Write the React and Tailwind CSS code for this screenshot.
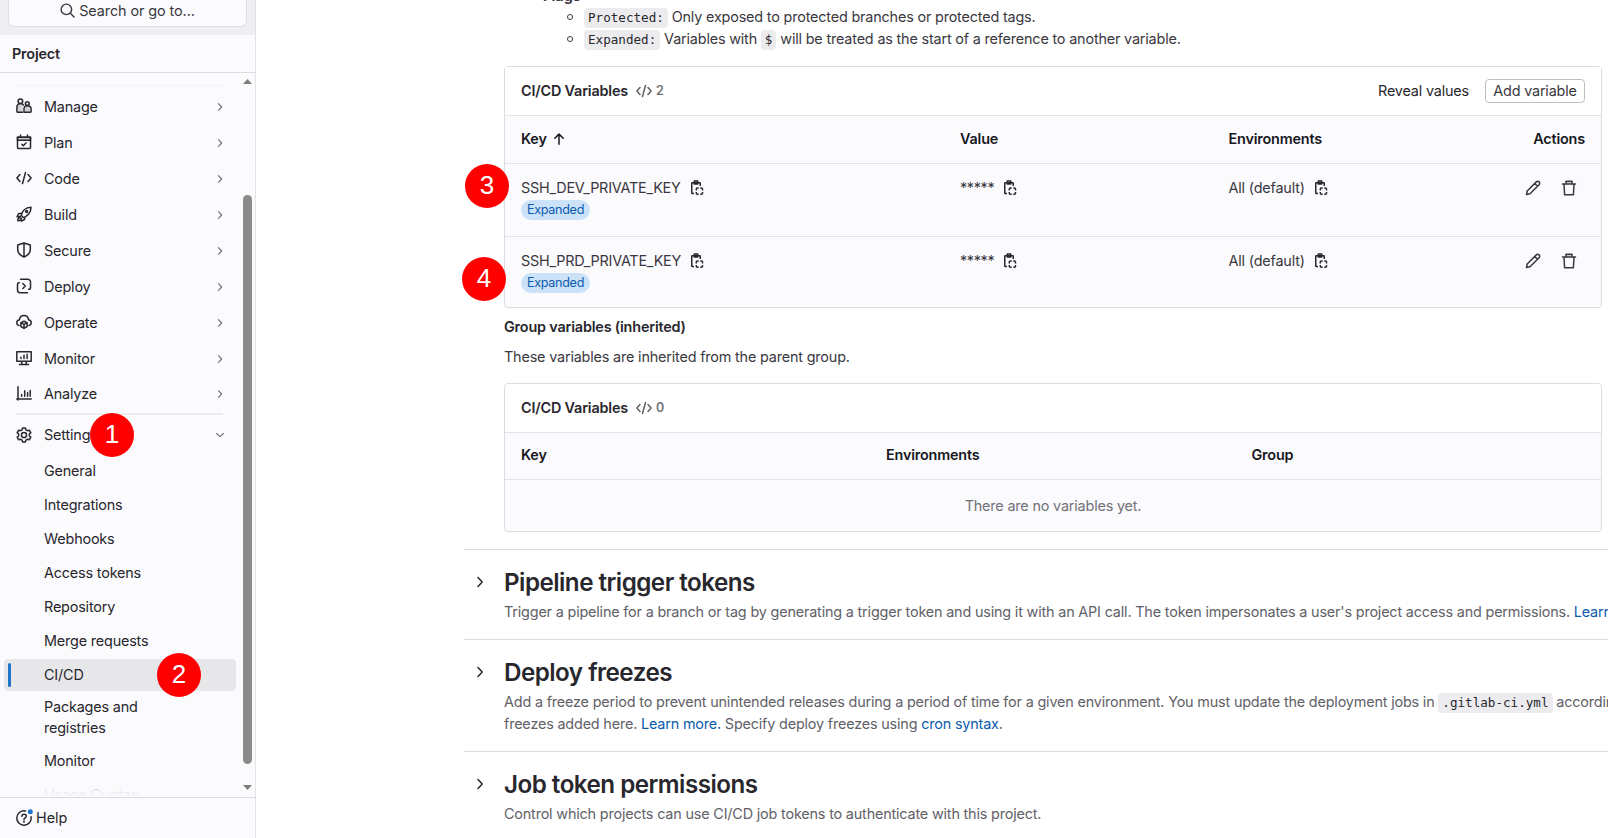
import React from "react";

const strokeProps = {
  fill: "none",
  stroke: "currentColor",
  strokeWidth: 1.5,
  strokeLinecap: "round",
  strokeLinejoin: "round",
};

function Icon({ className = "size-4", children }) {
  return (
    <svg viewBox="0 0 16 16" className={`shrink-0 ${className}`} {...strokeProps}>
      {children}
    </svg>
  );
}

const glyphs = {
  manage: (
    <>
      <path d="M2.300 6h4.200v8H1.500V8zM9 8.500h5v5.500H9z" fill="currentColor" fillOpacity=".2" stroke="none" />
      <circle cx="4.4" cy="3.2" r="2.3" />
      <path d="M6.6 14.2H1.5a.6.6 0 0 1-.6-.6V8.8c0-1.9 1.5-3.2 3.5-3.2 1.4 0 2.5.6 3 1.6" />
      <circle cx="11.3" cy="5.6" r="1.9" />
      <path d="M8 14.2h6.5a.6.6 0 0 0 .6-.6v-2.8c0-1.8-1.6-3.1-3.6-3.1S8 9 8 10.800z" />
    </>
  ),
  plan: (
    <>
      <path d="M1.500 6.200V3.200h13v3z" fill="currentColor" fillOpacity=".25" />
      <path d="M1.5 3.2h13v10.300a1 1 0 0 1-1 1h-11a1 1 0 0 1-1-1zM4.500 1v2M11.500 1v2M5.800 10.200l1.500 1.500 2.700-2.800" />
    </>
  ),
  code: <path d="M4 4.500.9 8 4 11.500M12 4.500 15.100 8 12 11.500M9.500 2.500l-3 11" />,
  build: (
    <>
      <path d="M5.200 9.300c.7-3.600 3.800-7.800 9.800-8.100.1 5.600-3.700 9.300-7.800 10.400zM5.600 7.200 2.700 7.500 1 10.800l3.300-.2M8.800 11l-.3 2.500-3.200 1.700-.1-3M4 11.800c-1.500.2-2.300 1.600-2.200 3 1.100 0 2.200-.2 2.900-1.200" />
      <circle cx="10.600" cy="5.500" r="1" />
    </>
  ),
  secure: <path d="M8 1 1.700 3v4.500c0 3.700 2.800 6 6.300 7.700 3.500-1.700 6.300-4 6.300-7.700V3zM8 1v14" />,
  deploy: (
    <path d="M4.500 1.300h7.300a2.700 2.700 0 0 1 2.700 2.700v5.800a1.500 1.500 0 0 1-1.500 1.500h-.4M3.300 4.700H3A1.500 1.500 0 0 0 1.500 6.200V12a2.700 2.700 0 0 0 2.700 2.700h7.300M6.800 5.500 9.300 8l-2.500 2.500" />
  ),
  operate: (
    <>
      <path d="M3 11.500C1.500 11.200.8 10 .8 8.700c0-1.600 1.200-2.700 2.600-2.900C3.700 3.300 5.600 1.500 8 1.500s4.300 1.800 4.600 4.300c1.400.2 2.600 1.300 2.600 2.900 0 1.300-.7 2.500-2.200 2.800" />
      <path d="M8 7.200 4.900 8.700v3.900L8 14.400l3.100-1.800V8.700zM5 8.800l3 1.500 3-1.500M8 10.500v3.800" />
    </>
  ),
  monitor: (
    <path d="M.8 1.800h14.400v9.400H.8zM5.700 11.500v2.700M10.300 11.500v2.700M3.500 14.400h9M4.900 7.200v1.300M8 5.200v3.300M11.100 4.200v4.300" />
  ),
  analyze: <path d="M2 .8v13.100M.8 13.100h14.400M5.600 8.500v1.700M8.700 4.700v5.500M11.600 6.500v3.700M14.200 4.500v5.700" />,
  settings: (
    <>
      <path d="M6.700.9h2.600l.6 1.900 1.500.9 2-.4 1.400 2.300L13.400 7v2l1.400 1.400-1.400 2.300-2-.4-1.500.9-.6 1.900H6.700l-.6-1.900-1.500-.9-2 .4-1.400-2.300L2.600 9V7L1.200 5.600l1.400-2.300 2 .4 1.500-.9z" />
      <circle cx="8" cy="8" r="2.600" />
    </>
  ),
};

const menu = [
  ["Manage", "manage"],
  ["Plan", "plan"],
  ["Code", "code"],
  ["Build", "build"],
  ["Secure", "secure"],
  ["Deploy", "deploy"],
  ["Operate", "operate"],
  ["Monitor", "monitor"],
  ["Analyze", "analyze"],
];

const Chevron = ({ className }) => (
  <Icon className={className}>
    <path d="M6 3.500 10.200 8 6 12.500" />
  </Icon>
);

function Callout({ n, className }) {
  return (
    <span
      className={`absolute z-10 flex size-11 items-center justify-center rounded-full bg-[#ff0000] pb-[3px] font-['Liberation_Sans',sans-serif] text-[26px] leading-none tracking-normal text-white ${className}`}
    >
      {n}
    </span>
  );
}

function Sidebar() {
  return (
    <aside className="flex h-full w-64 shrink-0 flex-col border-r border-[#e3e3e6] bg-[#fbfafd] text-[#28272d]">
      <div className="flex h-[35px] shrink-0 items-start bg-[#efeff1] px-2">
        <div className="flex h-[27px] w-full items-center justify-center gap-1 rounded-b-md border border-t-0 border-[#dfdfe2] bg-[#fbfafd] pb-[5px] text-[#3a383f]">
          <Icon className="size-[15px]">
            <circle cx="6.800" cy="6.800" r="5.600" />
            <path d="m11 11 4 4" />
          </Icon>
          <span className="tracking-[-0.080px]">Search or go to...</span>
        </div>
      </div>
      <div className="flex h-[38px] shrink-0 items-center border-b border-[#dcdcde] pl-3 font-semibold">Project</div>
      <div className="flex min-h-0 flex-1">
        <nav className="relative flex-1 overflow-hidden">
          <div className="mt-3 mr-4 ml-4 h-px bg-[#f3f2f5]" />
          <ul className="pt-[3px]">
            {menu.map(([label, glyph]) => (
              <li key={label} className="flex h-[35.940px] items-center pr-[13px] pl-4">
                <Icon className="mr-3 -mt-px size-4">{glyphs[glyph]}</Icon>
                <span className="flex-1">{label}</span>
                <Chevron className="size-3 text-[#737278]" />
              </li>
            ))}
          </ul>
          <div className="mt-px mr-4 ml-4 h-[2px] bg-[#ececef]" />
          <div className="relative mt-[2px] flex h-[36px] items-center pr-[13px] pl-4">
            <Icon className="mr-3 -mt-px size-4">{glyphs.settings}</Icon>
            <span className="flex-1">Settings</span>
            <Chevron className="size-3 rotate-90 text-[#737278]" />
            <Callout n="1" className="top-[-4px] left-[90px]" />
          </div>
          <ul className="pt-px">
            {["General", "Integrations", "Webhooks", "Access tokens", "Repository", "Merge requests"].map((t) => (
              <li key={t} className="flex h-[33.950px] items-center pl-11">
                {t}
              </li>
            ))}
            <li className="relative mr-[3px] ml-1 flex h-8 translate-y-[1px] items-center rounded-[4px] bg-[#e7e7ea] pl-10">
              <span className="absolute top-1 left-1 h-6 w-[3px] rounded-full bg-[#1f75cb]" />
              CI/CD
              <Callout n="2" className="top-[-6px] left-[153px]" />
            </li>
            <li className="mt-[6px] pl-11 leading-[21px]">
              Packages and
              <br />
              registries
            </li>
            <li className="mt-[6px] flex h-[34px] items-center pl-11">Monitor</li>
            <li className="flex h-[34px] items-center pl-11 opacity-30">Usage Quotas</li>
          </ul>
          <div className="absolute inset-x-0 bottom-0 h-5 bg-linear-to-b from-[#fbfafd]/0 to-[#fbfafd]" />
        </nav>
        <div className="flex w-4 flex-col items-center pt-[6px] pb-[7px]">
          <svg viewBox="0 0 9 5" className="h-[5px] w-[9px]">
            <path d="M0 5 4.500 0 9 5z" fill="#7d7d7d" />
          </svg>
          <div className="mt-[111px] w-[9px] flex-1 rounded-full bg-[#8b8b8b]" />
          <svg viewBox="0 0 9 5" className="mt-[21px] h-[5px] w-[9px]">
            <path d="M0 0 4.500 5 9 0z" fill="#7d7d7d" />
          </svg>
        </div>
      </div>
      <div className="flex h-[41px] shrink-0 items-center border-t border-[#dcdcde] pl-4">
        <svg viewBox="0 0 16 16" className="mr-1 size-4 overflow-visible" {...strokeProps}>
          <path d="M9.500 1A7.200 7.200 0 1 0 15.100 6.800M5.900 6.300c.1-1.200 1-2 2.200-2s2.200.8 2.200 1.900C10.300 7.700 8 7.900 8 9.400" />
          <circle cx="8" cy="11.700" r=".35" />
          <circle cx="14.300" cy="1.700" r="2.500" fill="#1f75cb" stroke="none" />
        </svg>
        <span className="tracking-normal">Help</span>
      </div>
    </aside>
  );
}

const Code = ({ children, className = "" }) => (
  <code
    className={`inline-block rounded-[4px] bg-[#ececef] px-1 font-['DejaVu_Sans_Mono',monospace] text-[12.600px] leading-[20px] tracking-normal text-[#28272d] ${className}`}
  >
    {children}
  </code>
);

const Copy = () => (
  <Icon className="ml-2 size-4 text-[#28272d]">
    <path
      d="M5 13.500H3.250a.5.500 0 0 1-.5-.5V3.250a.5.500 0 0 1 .5-.5h7.500a.5.500 0 0 1 .5.500V6M5.250 1h3.500v3h-3.500z"
      strokeLinecap="butt"
    />
    <path
      d="M9.700 8H8.300a1 1 0 0 0-1 1v1.400M11.300 8h1.200a1 1 0 0 1 1 1v1.400M7.300 12v1.300a1 1 0 0 0 1 1h1.400M11.300 14.300h1.200a1 1 0 0 0 1-1V12"
      strokeLinecap="butt"
    />
  </Icon>
);

function CardHeader({ count, children }) {
  return (
    <div className="flex h-[48px] items-center bg-white px-4">
      <h3 className="font-semibold text-[#28272d]">CI/CD Variables</h3>
      <Icon className="mr-1 ml-2 size-4 text-[#626168]">{glyphs.code}</Icon>
      <span className="text-[12.500px] font-semibold text-[#737278]">{count}</span>
      {children}
    </div>
  );
}

function VariableRow({ name, children }) {
  return (
    <div className="relative grid h-[73px] grid-cols-[439px_268.500px_1fr_auto] border-t border-[#e3e3e6] px-4 pt-[13px]">
      <div>
        <div className="flex h-[22px] items-center">
          <span className="tracking-[-0.240px]">{name}</span>
          <Copy />
        </div>
        <span className="mt-px flex h-5 w-[69px] items-center justify-center rounded-full bg-[#cbe2f9] text-[12.600px] tracking-[-0.300px] text-[#0b5cad]">
          Expanded
        </span>
      </div>
      <div className="flex h-[22px] items-center">
        <span className="tracking-[-0.350px]">*****</span>
        <Copy />
      </div>
      <div className="flex h-[22px] items-center">
        All (default)
        <Copy />
      </div>
      <div className="flex h-[22px] items-center gap-5 pr-2">
        <Icon className="size-4">
          <path d="M1.500 14.500 2.200 11 11.300 1.900a1.900 1.900 0 0 1 2.800 2.800L5 13.800zM9.800 3.500l2.700 2.700" />
        </Icon>
        <Icon className="size-4">
          <path d="M5 3.800V1.300h6v2.500" fill="currentColor" fillOpacity=".25" />
          <path d="M1.500 4h13M3 4.200l.6 10.500h8.800L13 4.200" />
        </Icon>
      </div>
      {children}
    </div>
  );
}

function Section({ title, children, className = "" }) {
  return (
    <section className={`flex border-t border-[#dcdcde] pt-4 ${className}`}>
      <Chevron className="mt-2 mr-4 ml-2 size-4 text-[#28272d]" />
      <div className="w-[1200px] shrink-0">
        <h2 className="pt-px text-[24.200px] leading-[32px] font-semibold tracking-[-0.520px] text-[#28272d]">
          {title}
        </h2>
        <div className="mt-[2px] text-[#626168]">{children}</div>
      </div>
    </section>
  );
}

const Link = ({ children }) => <a className="text-[#0b5cad]">{children}</a>;

export default function App() {
  return (
    <div className="flex h-[838px] w-[1608px] overflow-hidden bg-white font-['Inter',sans-serif] text-[14.400px] leading-[22px] tracking-[-0.174px] text-[#3a383f]">
      <Sidebar />
      <main className="flex min-w-0 flex-1 flex-col overflow-hidden pl-[208px]">
        <div className="pl-[79px]">
          <div className="-mt-[14px] h-[20px] font-bold leading-[20px] tracking-normal">Flags</div>
          <ul className="pl-[24px]">
            {[0, 1].map((i) => (
              <li key={i} className="flex h-[22px] items-center">
                <span className="mr-[11px] size-[6px] rounded-full border border-[#3a383f]" />
                {i === 0 ? (
                  <span>
                    <Code>Protected:</Code> Only exposed to protected branches or protected tags.
                  </span>
                ) : (
                  <span>
                    <Code>Expanded:</Code> Variables with <Code>$</Code> will be treated as the start of a reference to
                    another variable.
                  </span>
                )}
              </li>
            ))}
          </ul>
        </div>

        <div className="mt-4 ml-10 h-[242px] w-[1098px] shrink-0 overflow-visible rounded-[4px] border border-[#dcdcde] bg-[#fbfafd]">
          <CardHeader count="2">
            <span className="ml-auto text-[#28272d]">Reveal values</span>
            <button className="ml-4 h-6 w-[100px] rounded-[4px] border border-[#bfbfc3] leading-none">
              Add variable
            </button>
          </CardHeader>
          <div className="grid h-[48px] grid-cols-[439px_268.500px_1fr_auto] items-center border-t border-[#e3e3e6] px-4 pb-px font-semibold text-[#18171d]">
            <span className="flex items-center gap-[5px]">
              Key
              <Icon className="size-[14px]">
                <path d="M8 14V2.800M3.200 7.200 8 2.400l4.800 4.800" strokeWidth="1.700" />
              </Icon>
            </span>
            <span>Value</span>
            <span>Environments</span>
            <span>Actions</span>
          </div>
          <VariableRow name="SSH_DEV_PRIVATE_KEY">
            <Callout n="3" className="top-0 -left-10" />
          </VariableRow>
          <VariableRow name="SSH_PRD_PRIVATE_KEY">
            <Callout n="4" className="top-[20px] left-[-43px]" />
          </VariableRow>
        </div>

        <h3 className="mt-2 ml-10 font-semibold text-[#28272d]">Group variables (inherited)</h3>
        <p className="mt-2 ml-10">These variables are inherited from the parent group.</p>

        <div className="mt-[15px] ml-10 h-[149px] w-[1098px] shrink-0 overflow-hidden rounded-[4px] border border-[#dcdcde] bg-[#fbfafd]">
          <CardHeader count="0" />
          <div className="grid h-[48px] grid-cols-[365px_365.500px_1fr] items-center border-y border-[#e3e3e6] px-4 pb-[2px] font-semibold text-[#18171d]">
            <span>Key</span>
            <span>Environments</span>
            <span>Group</span>
          </div>
          <div className="flex h-[52px] items-center justify-center text-[#737278]">There are no variables yet.</div>
        </div>

        <div className="mt-[17px] shrink-0">
          <Section title="Pipeline trigger tokens" className="h-[90px]">
            <div className="whitespace-nowrap">
              Trigger a pipeline for a branch or tag by generating a trigger token and using it with an API call. The
              token impersonates a user's project access and permissions. <Link>Learn more.</Link>
            </div>
          </Section>
          <Section title="Deploy freezes" className="h-[112px]">
            <div className="whitespace-nowrap">
              Add a freeze period to prevent unintended releases during a period of time for a given environment. You must
              update the deployment jobs in <Code>.gitlab-ci.yml</Code> according to the deploy
            </div>
            freezes added here. <Link>Learn more.</Link> Specify deploy freezes using <Link>cron syntax</Link>.
          </Section>
          <Section title="Job token permissions" className="h-[90px]">
            Control which projects can use CI/CD job tokens to authenticate with this project.
          </Section>
        </div>
      </main>
    </div>
  );
}
